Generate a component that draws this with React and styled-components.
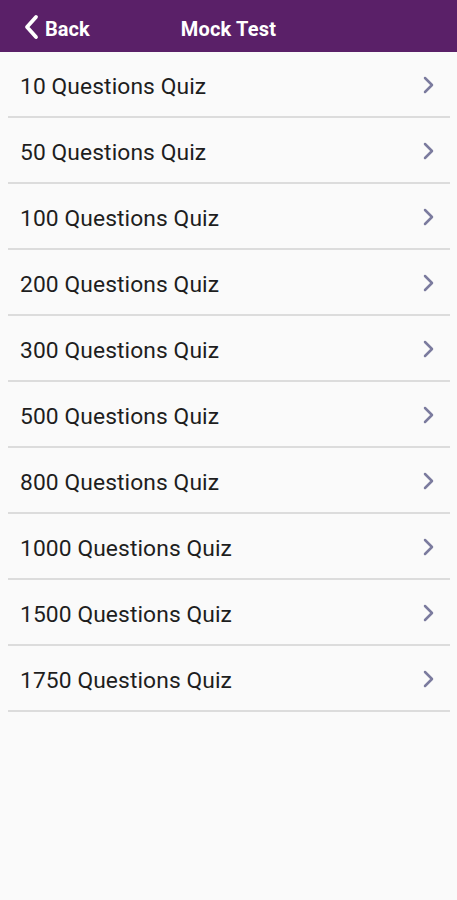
import React from 'react';
import styled, { createGlobalStyle } from 'styled-components';

const GlobalStyle = createGlobalStyle`
    html, body {
        margin: 0;
        padding: 0;
        background-color: #fafafa;
        font-family: Roboto, "Liberation Sans", sans-serif;
    }
`

const Screen = styled.div`
    width: 457px;
    min-height: 900px;
    background-color: #fafafa;
`

const Header = styled.header`
    height: 52px;
    box-sizing: border-box;
    padding-top: 5px;
    background-color: #5a2068;
    display: grid;
    grid-template-columns: 1fr auto 1fr;
    align-items: center;
    color: #ffffff;
`

const BackButton = styled.div`
    display: flex;
    align-items: center;
    gap: 5px;
    padding-left: 23px;
    font-size: 20px;
    font-weight: 700;
    svg{
        display: block;
        margin-top: -3px;
    }
`

const Title = styled.h1`
    margin: 0;
    font-size: 20px;
    font-weight: 700;
    letter-spacing: 0.2px;
`

const List = styled.ul`
    list-style: none;
    margin: 0;
    padding: 0;
`

const Row = styled.li`
    height: 66px;
    box-sizing: border-box;
    padding-top: 5px;
    display: flex;
    align-items: center;
    justify-content: space-between;
    margin-left: 8px;
    margin-right: 7px;
    padding-left: 12px;
    padding-right: 15px;
    border-bottom: 2px solid #dcdcdc;
    color: #1e1e1e;
    font-size: 22.8px;
    letter-spacing: 0.1px;
    svg{
        margin-top: -4px;
    }
`

const Chevron = () => (
    <svg width="13" height="18" viewBox="0 0 13 18">
        <path d="M3 2 L10 9 L3 16" fill="none" stroke="#7b7b9e" strokeWidth="2.5" strokeLinecap="round" strokeLinejoin="round" />
    </svg>
)

const quizzes = [10, 50, 100, 200, 300, 500, 800, 1000, 1500, 1750];

const App = () => {
    return (
        <Screen>
            <GlobalStyle />
            <Header>
                <BackButton>
                    <svg width="17" height="26" viewBox="0 0 17 26">
                        <path d="M13 3 L4 13 L13 23" fill="none" stroke="#ffffff" strokeWidth="3.8" strokeLinecap="round" strokeLinejoin="round" />
                    </svg>
                    Back
                </BackButton>
                <Title>Mock Test</Title>
                <div />
            </Header>
            <List>
                {quizzes.map(n => (
                    <Row key={n}>
                        {n} Questions Quiz
                        <Chevron />
                    </Row>
                ))}
            </List>
        </Screen>
    );
}

export default App;
